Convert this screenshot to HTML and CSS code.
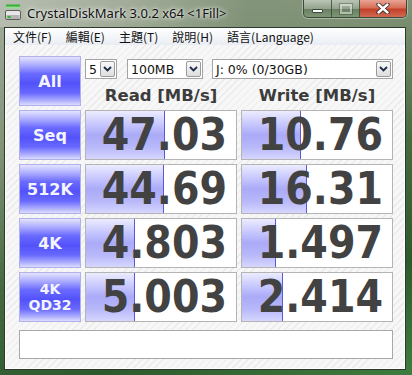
FILE: index.html
```html
<!DOCTYPE html>
<html lang="zh-Hant">
<head>
    <meta charset="UTF-8">
    <title>CrystalDiskMark 3.0.2 x64</title>
    <link rel="stylesheet" href="styles.css">
</head>
<body>
<div class="frame">
    <div class="titlebar">
        <svg class="app-icon" width="16" height="16" viewBox="0 0 16 16">
            <rect x="1" y="0.5" width="14" height="2" fill="#2fb52f"/>
            <rect x="1" y="3" width="14" height="1.5" fill="#8fe08f"/>
            <rect x="0.5" y="6.5" width="15" height="9" rx="1.5" fill="#e6e6e6" stroke="#5c5c5c"/>
            <rect x="1.5" y="11" width="13" height="4" fill="#b4b4b4"/>
            <rect x="2.5" y="12" width="3" height="2" fill="#2fb52f"/>
        </svg>
        <span class="title">CrystalDiskMark 3.0.2 x64 &lt;1Fill&gt;</span>
        <div class="caption-btns">
            <span class="cap-btn cap-min"><i></i></span>
            <span class="cap-btn cap-max"><i></i></span>
            <span class="cap-btn cap-close">
                <svg width="14" height="11" viewBox="0 0 14 11">
                    <path d="M2.5 1.5 L11.5 9.5 M11.5 1.5 L2.5 9.5" stroke="#3a2a2a" stroke-width="4.2" stroke-linecap="round"/>
                    <path d="M2.5 1.5 L11.5 9.5 M11.5 1.5 L2.5 9.5" stroke="#ffffff" stroke-width="2.4" stroke-linecap="round"/>
                </svg>
            </span>
        </div>
    </div>

    <div class="client">
        <div class="menubar">
            <span>文件(F)</span>
            <span>編輯(E)</span>
            <span>主題(T)</span>
            <span>說明(H)</span>
            <span>語言(Language)</span>
        </div>

        <div class="panel">
            <div class="grid">
                <div class="test-btn">All</div>
                <div class="head">
                    <div class="combos">
                        <div class="combo c-count"><span>5</span><b class="drop"><svg width="9" height="6" viewBox="0 0 9 6"><path d="M1 1 L4.5 4.5 L8 1" fill="none" stroke="#1c2b48" stroke-width="1.8"/></svg></b></div>
                        <div class="combo c-size"><span>100MB</span><b class="drop"><svg width="9" height="6" viewBox="0 0 9 6"><path d="M1 1 L4.5 4.5 L8 1" fill="none" stroke="#1c2b48" stroke-width="1.8"/></svg></b></div>
                        <div class="combo c-drive"><span>J: 0% (0/30GB)</span><b class="drop"><svg width="9" height="6" viewBox="0 0 9 6"><path d="M1 1 L4.5 4.5 L8 1" fill="none" stroke="#1c2b48" stroke-width="1.8"/></svg></b></div>
                    </div>
                    <div class="col-label">Read [MB/s]</div>
                    <div class="col-label">Write [MB/s]</div>
                </div>

                <div class="test-btn">Seq</div>
                <div class="cell" style="--fill:79px">47.03</div>
                <div class="cell" style="--fill:59px">10.76</div>

                <div class="test-btn">512K</div>
                <div class="cell" style="--fill:78px">44.69</div>
                <div class="cell" style="--fill:65px">16.31</div>

                <div class="test-btn">4K</div>
                <div class="cell" style="--fill:49px">4.803</div>
                <div class="cell" style="--fill:34px">1.497</div>

                <div class="test-btn small">4K<br>QD32</div>
                <div class="cell" style="--fill:49px">5.003</div>
                <div class="cell" style="--fill:41px">2.414</div>
            </div>
            <div class="status"></div>
        </div>
    </div>
</div>
</body>
</html>
```

FILE: styles.css
```css
body {
    margin : 0;
    font-family : "DejaVu Sans", sans-serif;
}

.frame {
    width : 412px;
    height : 375px;
    overflow : hidden;
    background : linear-gradient(160deg, #a4ac9c 0%, #839479 28%, #456a3e 55%, #2d5a2d 78%, #3f7d3f 100%);
}

/* title bar */

.titlebar {
    height : 27px;
    display : flex;
    align-items : flex-start;
    padding : 0 5px 0 5px;
    background : linear-gradient(to right, rgba(200,205,195,0.55) 0%, rgba(170,180,160,0.35) 35%, rgba(60,100,55,0.15) 60%, rgba(40,90,40,0) 100%);
}

.app-icon {
    margin-top : 4px;
    flex : none;
}

.title {
    margin-left : 6px;
    margin-top : 4px;
    font-family : "Noto Sans", sans-serif;
    font-size : 13px;
    color : #101010;
    text-shadow : 0 0 6px rgba(255,255,255,0.95), 0 0 3px rgba(255,255,255,0.9);
}

.caption-btns {
    margin-left : auto;
    display : flex;
    height : 17px;
    border : 1px solid #3a4a3a;
    border-top : none;
    border-radius : 0 0 5px 5px;
    overflow : hidden;
    box-shadow : 0 0 0 1px rgba(255,255,255,0.35);
}

.cap-btn {
    display : flex;
    align-items : center;
    justify-content : center;
    height : 17px;
}

.cap-min, .cap-max {
    width : 27px;
    background : linear-gradient(to bottom, rgba(255,255,255,0.45), rgba(255,255,255,0.15) 50%, rgba(30,60,30,0.25) 51%, rgba(120,160,110,0.35));
    border-right : 1px solid rgba(40,60,40,0.7);
}

.cap-min i {
    width : 9px;
    height : 2px;
    margin-top : 5px;
    background : #ffffff;
    border : 1px solid #3a4a3a;
    border-radius : 1px;
}

.cap-max i {
    width : 8px;
    height : 6px;
    border : 2px solid rgba(255,255,255,0.45);
    outline : 1px solid rgba(40,60,40,0.35);
}

.cap-close {
    width : 46px;
    background : linear-gradient(to bottom, #e8a394 0%, #d8705a 45%, #c2402a 55%, #d26a50 100%);
}

/* window client */

.client {
    margin-left : 4px;
    width : 402px;
    height : 343px;
    box-sizing : border-box;
    border : 1px solid #2b3a2b;
    background : #f6f6f6;
}

.menubar {
    height : 17px;
    display : flex;
    align-items : center;
    padding-left : 1px;
    background : linear-gradient(to bottom, #ffffff, #e9edf3);
    font-family : "Noto Sans CJK TC", sans-serif;
    font-size : 12px;
    color : #111111;
}

.menubar span {
    padding : 0 7px;
}

.panel {
    height : 324px;
    box-sizing : border-box;
    padding : 11px 0 0 13px;
    border : 1px solid #ffffff;
    border-top : none;
    background : repeating-linear-gradient(135deg, #f7f7f7 0 3px, #ebebeb 3px 4px, #f7f7f7 4px 5px);
}

.grid {
    display : grid;
    grid-template-columns : 62px 152px 152px;
    grid-auto-rows : 50px;
    column-gap : 4px;
    row-gap : 4px;
}

.test-btn {
    display : flex;
    align-items : center;
    justify-content : center;
    text-align : center;
    box-sizing : border-box;
    border : 1px solid #b0b0ea;
    background : linear-gradient(to bottom, #e4e4ff 0%, #a8a8ff 18%, #6a6aff 35%, #5252fa 55%, #6868ff 75%, #b4b4ff 92%, #dcdcff 100%);
    color : #f4f4ff;
    font-weight : bold;
    font-size : 16px;
}

.test-btn.small {
    font-size : 14px;
    line-height : 16px;
}

.head {
    grid-column : 2 / 4;
    display : grid;
    grid-template-columns : 152px 152px;
    column-gap : 4px;
    align-content : start;
}

.combos {
    grid-column : 1 / 3;
    display : flex;
    margin-top : 3px;
    height : 20px;
}

.combo {
    display : flex;
    align-items : center;
    justify-content : space-between;
    box-sizing : border-box;
    height : 20px;
    padding : 0 1px 0 3px;
    border : 1px solid #a4a4a4;
    background : #ffffff;
    font-size : 12.5px;
    color : #111111;
}

.c-count { width : 32px; }
.c-size { width : 76px; margin-left : 10px; }
.c-drive { width : 181px; margin-left : 9px; }

.drop {
    display : flex;
    align-items : center;
    justify-content : center;
    width : 15px;
    height : 16px;
    box-sizing : border-box;
    border : 1px solid #9a9a9a;
    border-radius : 2px;
    background : linear-gradient(to bottom, #f8f8f8, #dedede);
}

.col-label {
    margin-top : 7px;
    text-align : center;
    font-size : 16.5px;
    line-height : 19px;
    font-weight : bold;
    color : #3c3c3c;
}

.cell {
    box-sizing : border-box;
    border : 1px solid #b4b4b4;
    padding-right : 9px;
    text-align : right;
    font-family : "DejaVu Sans Condensed", "DejaVu Sans", sans-serif;
    font-stretch : condensed;
    font-weight : bold;
    font-size : 44px;
    line-height : 48px;
    color : #424242;
    background-color : #ffffff;
    background-image : linear-gradient(#5a5ad2, #5a5ad2), linear-gradient(to bottom, #ececff 0%, #c4c4ff 30%, #aaaaf8 50%, #b8b8fa 75%, #d6d6ff 100%);
    background-size : 1px 100%, var(--fill) 100%;
    background-position : calc(var(--fill) - 1px) 0, 0 0;
    background-repeat : no-repeat;
}

.status {
    width : 374px;
    height : 29px;
    margin-top : 8px;
    box-sizing : border-box;
    border : 1px solid #a8a8a8;
    background : #ffffff;
}
```
